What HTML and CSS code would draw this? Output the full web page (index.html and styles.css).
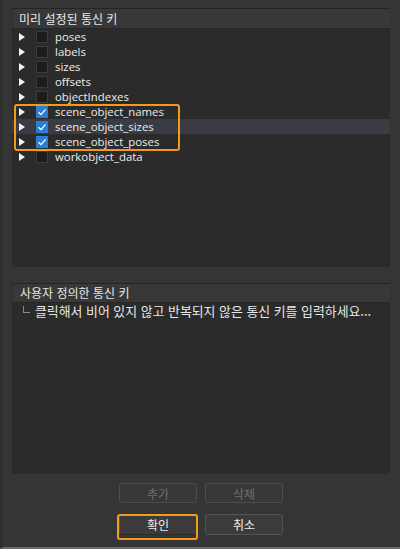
FILE: index.html
```html
<!DOCTYPE html>
<html lang="ko">
<head>
<meta charset="utf-8">
<link rel="stylesheet" href="styles.css">
</head>
<body>
<div class="dialog">
  <section class="group preset">
    <div class="group-header">미리 설정된 통신 키</div>
    <div class="tree">
      <div class="row"><span class="arrow"></span><span class="check"></span><span class="label">poses</span></div>
      <div class="row"><span class="arrow"></span><span class="check"></span><span class="label">labels</span></div>
      <div class="row"><span class="arrow"></span><span class="check"></span><span class="label">sizes</span></div>
      <div class="row"><span class="arrow"></span><span class="check"></span><span class="label">offsets</span></div>
      <div class="row"><span class="arrow"></span><span class="check"></span><span class="label">objectIndexes</span></div>
      <div class="row"><span class="arrow"></span><span class="check on"><svg viewBox="0 0 12 12" width="12" height="12"><path d="M2.5 6.2 L5 8.6 L9.6 3.4" fill="none" stroke="#fff" stroke-width="1.3"/></svg></span><span class="label">scene_object_names</span></div>
      <div class="row hover"><span class="arrow"></span><span class="check on"><svg viewBox="0 0 12 12" width="12" height="12"><path d="M2.5 6.2 L5 8.6 L9.6 3.4" fill="none" stroke="#fff" stroke-width="1.3"/></svg></span><span class="label">scene_object_sizes</span></div>
      <div class="row"><span class="arrow"></span><span class="check on"><svg viewBox="0 0 12 12" width="12" height="12"><path d="M2.5 6.2 L5 8.6 L9.6 3.4" fill="none" stroke="#fff" stroke-width="1.3"/></svg></span><span class="label">scene_object_poses</span></div>
      <div class="row"><span class="arrow"></span><span class="check"></span><span class="label">workobject_data</span></div>
      <div class="highlight-box"></div>
    </div>
  </section>
  <section class="group custom">
    <div class="group-header">사용자 정의한 통신 키</div>
    <div class="tree">
      <div class="placeholder"><span class="branch"></span><span class="hint">클릭해서 비어 있지 않고 반복되지 않은 통신 키를 입력하세요...</span></div>
    </div>
  </section>
  <div class="buttons">
    <div class="btn-row">
      <button class="btn" disabled>추가</button>
      <button class="btn" disabled>삭제</button>
    </div>
    <div class="btn-row">
      <button class="btn focus">확인</button>
      <button class="btn">취소</button>
    </div>
  </div>
</div>
</body>
</html>
```

FILE: styles.css
```css
* { box-sizing: border-box; }
html, body {
  margin: 0;
  padding: 0;
  background: #353535;
  height: 100%;
}
body {
  font-family: "Open Sans", "Noto Sans CJK KR", sans-serif;
  font-size: 12px;
  color: #e2e2e2;
  overflow: hidden;
}
.dialog {
  height: 549px;
  padding: 8px 10px 0 9px;
  border-left: 3px solid #2f2f2f;
  border-bottom: 2px solid #6a6a6a;
  display: flex;
  flex-direction: column;
}
.group {
  display: flex;
  flex-direction: column;
  border-top: 1px solid #242424;
}
.group-header {
  background: #383838;
  height: 20px;
  line-height: 19px;
  padding-left: 6px;
  border-bottom: 1px solid #262626;
  border-left: 1px solid #2e2e2e;
  font-family: "Noto Sans CJK KR", sans-serif;
  font-size: 12px;
  color: #e8e8e8;
}
.preset { height: 259px; }
.custom { height: 191px; margin-top: 16px; }
.custom .group-header { height: 19px; line-height: 18px; padding-left: 7px; }
.tree {
  flex: 1;
  background: #2b2b2b;
  position: relative;
}
.row {
  height: 15px;
  display: flex;
  align-items: center;
}
.row.hover { background: #393c42; }
.arrow {
  width: 0;
  height: 0;
  margin-left: 7px;
  border-top: 4px solid transparent;
  border-bottom: 4px solid transparent;
  border-left: 6px solid #f2f2f2;
}
.check {
  width: 12px;
  height: 12px;
  margin-left: 11px;
  background: #1c1c1c;
  border: 1px solid #3c3c3c;
  display: flex;
}
.check.on {
  background: #2a7fd5;
  border-color: #2a7fd5;
}
.check.on svg { margin: -1px; }
.label {
  margin-left: 7px;
  font-size: 11.4px;
  line-height: 15px;
  color: #ececec;
}
.highlight-box {
  position: absolute;
  left: 2px;
  top: 75px;
  width: 166px;
  height: 47px;
  border: 2px solid #f39a1e;
  border-radius: 3px;
  pointer-events: none;
}
.placeholder {
  height: 16px;
  display: flex;
  align-items: center;
}
.branch {
  width: 7px;
  height: 7px;
  margin-left: 11px;
  margin-top: -4px;
  border-left: 1px solid #8a8a8a;
  border-bottom: 1px solid #8a8a8a;
}
.hint {
  margin-left: 5px;
  font-family: "Noto Sans CJK KR", sans-serif;
  font-size: 12.9px;
  line-height: 16px;
  color: #e8e8e8;
}
.buttons {
  display: flex;
  flex-direction: column;
  gap: 11px;
  margin-top: 9px;
}
.btn-row {
  display: flex;
  justify-content: center;
  gap: 8px;
}
.btn {
  width: 78px;
  height: 20px;
  padding: 0;
  background: #3b3b3b;
  border: 1px solid #535353;
  border-radius: 3px;
  font-family: "Noto Sans CJK KR", sans-serif;
  font-size: 12px;
  line-height: 17px;
  color: #ececec;
  position: relative;
}
.btn:disabled { color: #6f6f6f; background: #383838; border-color: #4c4c4c; }
.btn-row:last-child .btn { height: 21px; }
.btn.focus { border-bottom-color: #2a2a2a; }
.btn.focus::after {
  content: "";
  position: absolute;
  left: -3px;
  right: -2px;
  top: -1px;
  bottom: -6px;
  border: 2px solid #f39a1e;
  border-radius: 3px;
}
```
